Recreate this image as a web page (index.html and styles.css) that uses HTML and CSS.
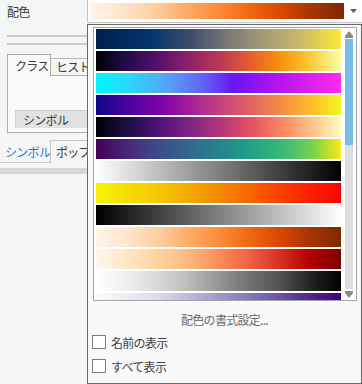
FILE: index.html
```html
<!DOCTYPE html>
<html lang="ja">
<head>
    <meta charset="UTF-8">
    <meta name="viewport" content="width=device-width, initial-scale=1.0">
    <title>配色</title>
    <link rel="stylesheet" href="styles.css">
</head>
<body>
    <div class="top-row">
        <span class="top-label">配色</span>
        <div class="combo">
            <div class="combo-ramp ramp-oranges"></div>
            <svg class="combo-arrow" width="7" height="4" viewBox="0 0 7 4"><polygon points="0,0 7,0 3.5,4" fill="#606060"/></svg>
        </div>
    </div>

    <div class="side">
        <div class="rule"></div>
        <div class="rule rule2"></div>

        <div class="tabs">
            <div class="tab active">クラス</div>
            <div class="tab">ヒストグラム</div>
            <div class="tab-fill"></div>
        </div>
        <div class="tab-body">
            <div class="grid-head">シンボル</div>
        </div>

        <div class="bottom-tabs">
            <div class="btab current">シンボル</div>
            <div class="btab boxed">ポップアップ</div>
        </div>
        <div class="grey-bar"></div>
    </div>

    <!-- dropdown of the colour scheme combo -->
    <div class="popup">
        <div class="ramp-list">
            <div class="ramps">
                <div class="ramp ramp-cividis"></div>
                <div class="ramp ramp-inferno"></div>
                <div class="ramp ramp-cool"></div>
                <div class="ramp ramp-plasma"></div>
                <div class="ramp ramp-magma"></div>
                <div class="ramp ramp-viridis"></div>
                <div class="ramp ramp-white-black"></div>
                <div class="ramp ramp-yellow-red"></div>
                <div class="ramp ramp-black-white"></div>
                <div class="ramp ramp-oranges"></div>
                <div class="ramp ramp-orrd"></div>
                <div class="ramp ramp-greys"></div>
                <div class="ramp ramp-purples"></div>
            </div>
            <div class="scrollbar">
                <div class="sb-btn">
                    <svg width="8" height="7" viewBox="0 0 8 7"><polygon points="4,0 8,5 0,5" fill="#8a8a8a"/><rect x="0" y="5" width="8" height="2" fill="#8a8a8a"/></svg>
                </div>
                <div class="sb-thumb"></div>
                <div class="sb-track"></div>
                <div class="sb-btn">
                    <svg width="8" height="7" viewBox="0 0 8 7"><rect x="0" y="0" width="8" height="2" fill="#8a8a8a"/><polygon points="0,2 8,2 4,7" fill="#8a8a8a"/></svg>
                </div>
            </div>
        </div>

        <div class="format-link">配色の書式設定...</div>

        <label class="check"><span class="box"></span>名前の表示</label>
        <label class="check"><span class="box"></span>すべて表示</label>
    </div>
</body>
</html>
```

FILE: styles.css
```css
body {
    margin: 0;
    width: 362px;
    height: 384px;
    overflow: hidden;
    position: relative;
    background: #f4f5f5;
    font-family: "Noto Sans CJK JP", sans-serif;
    font-size: 12px;
    letter-spacing: -0.7px;
    color: #3a3a3a;
}

.top-row {
    display: flex;
    height: 24px;
}
.top-label {
    width: 80px;
    padding-left: 7px;
    line-height: 23px;
}
.combo {
    flex: 1;
    height: 22px;
    background: #fff;
    border-left: 1px solid #c4c4c4;
    border-bottom: 1px solid #c4c4c4;
    display: flex;
    align-items: center;
    padding-left: 2px;
}
.combo-ramp {
    width: 254px;
    height: 16px;
}
.combo-arrow {
    margin-left: 6px;
}

/* left panel behind the dropdown */
.side {
    width: 87px;
}
.rule {
    height: 2px;
    margin: 11px 0 0 7px;
    background: #cbcbcb;
}
.rule2 {
    margin-top: 6px;
}
.tabs {
    display: flex;
    align-items: flex-end;
    margin: 9px 0 0 7px;
    width: 140px;
}
.tab {
    white-space: nowrap;
    line-height: 16px;
}
.tab.active {
    width: 35px;
    height: 21px;
    padding-left: 7px;
    line-height: 22px;
    background: #fafafa;
    border: 1px solid #acacac;
    border-bottom: none;
}
.tab:not(.active) {
    height: 16px;
    padding: 0 6px 0 5px;
    border-top: 1px solid #b8b8b8;
    border-right: 1px solid #b8b8b8;
    border-bottom: 1px solid #acacac;
}
.tab-fill {
    flex: 1;
    border-bottom: 1px solid #acacac;
}
.tab-body {
    margin-left: 7px;
    width: 140px;
    height: 22px;
    padding-top: 34px;
    background: #fafafa;
    border-left: 1px solid #acacac;
    border-bottom: 1px solid #acacac;
}
.grid-head {
    margin-left: 7px;
    height: 17px;
    padding-left: 7px;
    line-height: 17px;
    white-space: nowrap;
    background: #e1e1e1;
    border-top: 1px solid #d0d0d0;
    border-left: 1px solid #d0d0d0;
}

.bottom-tabs {
    display: flex;
    margin-top: 7px;
    height: 23px;
    width: 150px;
}
.btab {
    white-space: nowrap;
    line-height: 24px;
}
.btab.current {
    width: 45px;
    padding-left: 5px;
    color: #1f7bd0;
    border-bottom: 1px solid #c8c8c8;
}
.btab.boxed {
    padding: 0 6px 0 5px;
    border-top: 1px solid #c8c8c8;
    border-left: 1px solid #c8c8c8;
    line-height: 21px;
}
.grey-bar {
    height: 6px;
    margin-top: 5px;
    background: #d6d6d6;
}

/* dropdown */
.popup {
    position: absolute;
    left: 87px;
    top: 24px;
    width: 273px;
    height: 358px;
    background: #f9f9f9;
    border: 1px solid #6a6a6a;
}
.ramp-list {
    display: flex;
    margin: 2px 0 0 5px;
    width: 262px;
    height: 272px;
    background: #fff;
    border: 1px solid #a6a6a6;
}
.ramps {
    width: 245px;
    height: 271px;
    margin: 1px 0 0 2px;
    overflow: hidden;
    display: flex;
    flex-direction: column;
    gap: 2px;
}
.ramp {
    flex: none;
    height: 20px;
}
.scrollbar {
    width: 8px;
    margin: 1px 0 0 4px;
    display: flex;
    flex-direction: column;
}
.sb-btn {
    height: 10px;
    display: flex;
    align-items: center;
    justify-content: center;
}
.sb-thumb {
    height: 106px;
    background: #79bce6;
}
.sb-track {
    height: 144px;
    background: #dddddd;
}

.format-link {
    margin-top: 11px;
    line-height: 16px;
    text-align: center;
    color: #6a6a6a;
}
.check {
    display: flex;
    align-items: center;
    height: 24px;
    padding-left: 4px;
    color: #3e3e3e;
}
.check:first-of-type {
    margin-top: 2px;
}
.box {
    width: 12px;
    height: 12px;
    margin-right: 5px;
    background: #fff;
    border: 1px solid #7c7c7c;
}

/* colour ramps */
.ramp-cividis {
    background: linear-gradient(to right, #00204d 0%, #01346f 22%, #3c4b6c 38%, #737373 52%, #9d9677 66%, #c8b66b 82%, #fee838 100%);
}
.ramp-inferno {
    background: linear-gradient(to right, #000004 0%, #1f0c48 12%, #550f6d 25%, #88226a 37%, #ba3655 50%, #e35933 62%, #f98c0a 74%, #f9c932 87%, #fcffa4 100%);
}
.ramp-cool {
    background: linear-gradient(to right, #00f6ff 0%, #2cd6fb 14%, #5a9ef8 30%, #6262f5 44%, #6a14f2 56%, #ac14ef 72%, #ff2aee 100%);
}
.ramp-plasma {
    background: linear-gradient(to right, #0d0887 0%, #4c02a1 13%, #7e03a8 27%, #a92395 40%, #cc4778 53%, #e66c5c 66%, #f89540 78%, #fdc527 90%, #f0f921 100%);
}
.ramp-magma {
    background: linear-gradient(to right, #000004 0%, #1c1044 13%, #4f127b 26%, #812581 39%, #b5367a 51%, #e55064 63%, #fb8761 76%, #fec287 88%, #fcfdbf 100%);
}
.ramp-viridis {
    background: linear-gradient(to right, #440154 0%, #482878 13%, #3e4a89 25%, #31688e 38%, #26828e 50%, #1f9e89 62%, #35b779 75%, #6ece58 87%, #b5de2b 94%, #fde725 100%);
}
.ramp-white-black {
    background: linear-gradient(to right, #ffffff, #000000);
}
.ramp-yellow-red {
    background: linear-gradient(to right, #f5f500 0%, #f5c800 25%, #f59000 48%, #fa5000 70%, #ff0000 100%);
}
.ramp-black-white {
    background: linear-gradient(to right, #000000, #ffffff);
}
.ramp-oranges {
    background: linear-gradient(to right, #fff5eb 0%, #fee6ce 12%, #fdd0a2 25%, #fdae6b 37%, #fd8d3c 50%, #f16913 62%, #d94801 75%, #a63603 87%, #7f2704 100%);
}
.ramp-orrd {
    background: linear-gradient(to right, #fff7ec 0%, #fee8c8 12%, #fdd49e 25%, #fdbb84 37%, #fc8d59 50%, #ef6548 62%, #d7301f 75%, #b30000 87%, #7f0000 100%);
}
.ramp-greys {
    background: linear-gradient(to right, #ffffff 0%, #f0f0f0 12%, #d9d9d9 25%, #bdbdbd 37%, #969696 50%, #737373 62%, #525252 75%, #252525 87%, #000000 100%);
}
.ramp-purples {
    background: linear-gradient(to right, #fcfbfd 0%, #efedf5 12%, #dadaeb 25%, #bcbddc 37%, #9e9ac8 50%, #807dba 62%, #6a51a3 75%, #54278f 87%, #3f007d 100%);
}
```
